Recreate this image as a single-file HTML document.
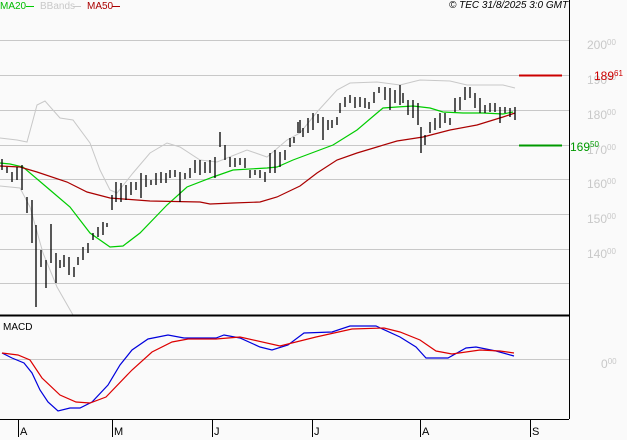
<!DOCTYPE html>
<html><head><meta charset="utf-8"><style>
html,body{margin:0;padding:0;background:#fafafa;}
body{width:627px;height:440px;overflow:hidden;position:relative;font-family:"Liberation Sans",sans-serif;}
.t{position:absolute;font-size:11px;line-height:11px;white-space:nowrap;}
.ax{color:#c8c8c8;font-size:12px;}
.ax sup,.m sup{font-size:8px;vertical-align:0;position:relative;top:-4px;}
</style></head><body>
<svg width="627" height="440" style="position:absolute;left:0;top:0" xmlns="http://www.w3.org/2000/svg">
<g stroke="#c8c8c8" stroke-width="1" shape-rendering="crispEdges">
<line x1="0" y1="40.5" x2="569" y2="40.5"/><line x1="0" y1="75.5" x2="569" y2="75.5"/><line x1="0" y1="110.5" x2="569" y2="110.5"/><line x1="0" y1="145.5" x2="569" y2="145.5"/><line x1="0" y1="179.5" x2="569" y2="179.5"/><line x1="0" y1="214.5" x2="569" y2="214.5"/><line x1="0" y1="249.5" x2="569" y2="249.5"/><line x1="0" y1="283.5" x2="569" y2="283.5"/>
<line x1="0" y1="359.5" x2="569" y2="359.5"/>
</g>
<g fill="none" stroke="#c8c8c8" stroke-width="1">
<polyline points="0,138 17,140 27,142 33,120 37,105 45,101 60,118 73,120 90,143 100,170 110,190 117,193 133,173 150,153 167,143 180,147 200,160 217,162 247,150 267,157 287,140 300,133 317,112 337,90 350,83 377,82 400,85 420,80 450,81 467,85 503,85 515,88"/>
<polyline points="0,186 20,188 30,207 43,253 57,287 73,315 M100,315 100,307 113,300 133,303 153,290 173,263 190,230 200,200 213,192 233,188 267,185 283,185 300,190 317,187 337,177 360,160 383,140 400,130 413,128 423,137 443,140 483,142 510,140 515,135"/>
</g>
<polyline fill="none" stroke="#00cc00" stroke-width="1.2" points="0,163 10,164 23,167 50,190 70,207 90,233 110,247 123,246 140,233 167,205 187,187 213,177 233,170 267,168 277,167 293,160 333,145 357,130 377,113 383,108 397,107 413,106 430,108 443,112 463,113 483,113 503,114 513,112"/>
<polyline fill="none" stroke="#aa0000" stroke-width="1.2" points="0,166 20,167 37,172 67,182 87,192 110,198 150,201 200,202 210,204 233,203 260,202 277,197 300,186 317,173 337,160 357,153 377,147 397,141 423,137 450,130 477,125 503,117 515,113"/>
<path fill="none" stroke="#000" stroke-width="1.3" d="M2 159V170M7 167V173M12 172V182M17 167V180M22 165V190M27 197V213M32 200V243M36 225V307M41 250V267M46 260V288M51 224V263M56 253V283M60 260V268M64 255V267M69 257V275M74 267V277M78 257V265M83 247V260M88 243V253M93 233V240M98 227V237M103 222V235M107 223V227M112 195V210M116 182V202M121 183V202M126 185V200M131 182V195M136 182V190M141 173V198M146 175V187M151 180V185M156 173V185M161 172V183M166 173V183M170 170V178M175 170V177M180 172V202M185 173V179M190 168V178M195 160V173M200 160V175M205 162V173M210 160V173M215 157V178M220 132V147M225 145V160M230 157V167M235 158V167M240 158V165M245 158V168M250 170V178M255 170V175M260 170V178M265 172V182M270 153V173M275 150V173M280 152V167M285 150V160M290 138V147M294 137V143M298 122V133M300 120V133M303 128V137M308 118V133M313 113V130M318 114V123M323 117V140M328 120V130M332 120V128M337 117V125M340 103V113M345 97V107M350 95V103M355 97V108M360 97V107M365 98V108M369 102V109M374 92V103M379 87V93M385 87V100M390 88V110M395 90V103M400 85V105M403 93V103M408 100V115M413 100V118M418 103V125M421 127V153M425 135V145M430 122V133M435 118V130M440 113V128M445 113V123M450 118V125M455 98V112M460 97V110M465 87V100M470 87V98M475 93V108M480 98V113M485 105V113M490 103V112M495 103V112M500 107V123M505 107V113M510 108V117M515 107V120"/>
<line x1="519" y1="75.5" x2="562" y2="75.5" stroke="#cc0000" stroke-width="2"/>
<line x1="519" y1="145.5" x2="562" y2="145.5" stroke="#009900" stroke-width="2"/>
<line x1="569.5" y1="0" x2="569.5" y2="419" stroke="#000" stroke-width="1"/>
<line x1="0" y1="315.5" x2="569" y2="315.5" stroke="#000" stroke-width="2"/>
<line x1="0" y1="419.5" x2="569" y2="419.5" stroke="#000" stroke-width="1"/>
<g stroke="#000" stroke-width="1" shape-rendering="crispEdges">
<line x1="18.5" y1="419" x2="18.5" y2="437"/><line x1="112.5" y1="419" x2="112.5" y2="437"/><line x1="212.5" y1="419" x2="212.5" y2="437"/><line x1="312.5" y1="419" x2="312.5" y2="437"/><line x1="420.5" y1="419" x2="420.5" y2="437"/><line x1="530.5" y1="419" x2="530.5" y2="437"/>
</g>
<polyline fill="none" stroke="#0000dd" stroke-width="1.2" points="2,353 12,358 24,363 32,373 40,390 48,402 58,411 70,408 80,408 92,402 108,385 120,365 132,350 148,339 168,335 184,338 216,338 224,335 240,338 260,347 272,350 288,345 304,333 332,332 350,326 376,326 400,337 416,347 426,358 448,358 466,348 476,347 496,351 514,356"/>
<polyline fill="none" stroke="#dd0000" stroke-width="1.2" points="2,353 18,355 30,360 42,378 60,395 76,402 90,403 106,397 132,370 152,352 172,342 188,339 216,339 240,337 280,346 316,337 352,329 384,328 400,332 420,340 436,351 452,354 480,350 500,351 514,353"/>
<g fill="#00cc00"><rect x="26" y="6" width="8" height="1"/></g>
<rect x="73" y="6" width="8" height="1" fill="#c8c8c8"/>
<rect x="112" y="6" width="8" height="1" fill="#aa0000"/>
</svg>
<div class="t" style="left:0;top:1px;color:#00bb00;font-size:10px">MA20</div>
<div class="t" style="left:40px;top:1px;color:#c8c8c8;font-size:10px">BBands</div>
<div class="t" style="left:87px;top:1px;color:#aa0000;font-size:10px">MA50</div>
<div class="t" style="left:449px;top:0;color:#000;font-size:10px;font-style:italic">© TEC 31/8/2025 3:0 GMT</div>
<div class="t ax" style="left:587px;top:40px">200<sup>00</sup></div>
<div class="t ax" style="left:587px;top:75px">190<sup>00</sup></div>
<div class="t ax" style="left:587px;top:110px">180<sup>00</sup></div>
<div class="t ax" style="left:587px;top:145px">170<sup>00</sup></div>
<div class="t ax" style="left:587px;top:179px">160<sup>00</sup></div>
<div class="t ax" style="left:587px;top:214px">150<sup>00</sup></div>
<div class="t ax" style="left:587px;top:249px">140<sup>00</sup></div>
<div class="t ax" style="left:601px;top:359px">0<sup>00</sup></div>
<div class="t m" style="left:594px;top:71px;color:#cc0000;font-size:12px">189<sup>61</sup></div>
<div class="t m" style="left:570px;top:142px;color:#009900;font-size:12px">169<sup>50</sup></div>
<div class="t" style="left:3px;top:322px;font-size:10px;color:#000">MACD</div>
<div class="t" style="left:20px;top:427px;font-size:11px">A</div>
<div class="t" style="left:114px;top:427px;font-size:11px">M</div>
<div class="t" style="left:214px;top:427px;font-size:11px">J</div>
<div class="t" style="left:314px;top:427px;font-size:11px">J</div>
<div class="t" style="left:422px;top:427px;font-size:11px">A</div>
<div class="t" style="left:532px;top:427px;font-size:11px">S</div>
</body></html>
